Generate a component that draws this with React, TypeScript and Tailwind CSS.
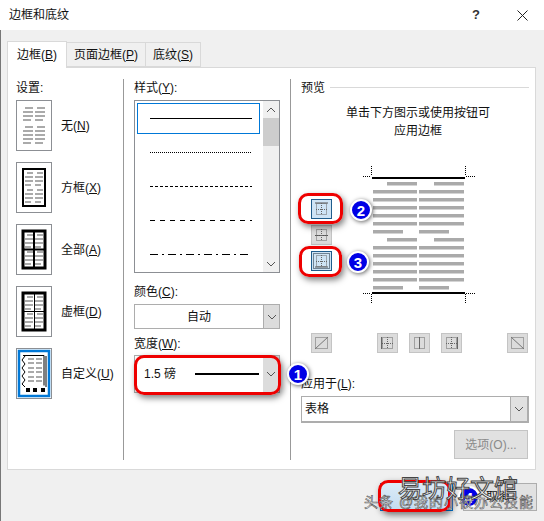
import type { ReactNode } from 'react'

const FONT = "font-['Liberation_Sans','Noto_Sans_CJK_SC',sans-serif]"

function Hot({ text, k, after = ')' }: { text: string; k: string; after?: string }) {
  return (
    <span>
      {text}(<span className="underline">{k}</span>{after}
    </span>
  )
}

function Chevron({ className = '' }: { className?: string }) {
  return (
    <svg width="10" height="6" viewBox="0 0 10 6" className={className}>
      <path d="M1 1l4 4 4-4" fill="none" stroke="#555" strokeWidth="1" />
    </svg>
  )
}

// little grey text lines inside the setting tiles
function Rows({ x1, x2, w, ys }: { x1: number; x2: number; w: number; ys: number[] }) {
  const step = Math.floor(w / 4)
  return (
    <g fill="#aaa">
      {ys.map((y, i) => {
        const indent = i === 0 || i === 4
        const short = i === 3 || i === ys.length - 1
        const d = indent ? step : 0
        const cut = short ? step : 0
        return (
          <g key={y}>
            <rect x={x1 + d} y={y} width={w - d - cut} height="2" />
            <rect x={x2 + d} y={y} width={w - d - cut} height="2" />
          </g>
        )
      })}
    </g>
  )
}

function Tile({ children, label }: { children: ReactNode; label: ReactNode }) {
  return (
    <div className="flex items-center h-[51px]">
      <div className="w-[36px] h-[51px] border border-[#8c8f94] bg-white flex items-center justify-center">
        <svg width="34" height="49" viewBox="0 0 34 49" className="block">
          {children}
        </svg>
      </div>
      <div className="ml-[9px] text-[12px] text-[#111]">{label}</div>
    </div>
  )
}

function StyleRow({ dash }: { dash?: string }) {
  return (
    <div className="h-[34px] flex items-center pl-[13px]">
      <svg width="104" height="3" className="block">
        <line x1="0" y1="1.5" x2="102" y2="1.5" stroke="#000" strokeWidth="1" strokeDasharray={dash} />
      </svg>
    </div>
  )
}

function BorderBtn({ children, active }: { children: ReactNode; active?: boolean }) {
  return (
    <div
      className={
        active
          ? 'w-[21px] h-[20px] border border-[#1f5c8c] bg-[#cfe4f5]'
          : 'w-[21px] h-[20px] border border-[#c4c4c4] bg-[#dcdcdc]'
      }
    >
      <svg width="19" height="18" viewBox="0 0 19 18" className="block">
        {children}
      </svg>
    </div>
  )
}

const dots = { fill: 'none', stroke: '#666', strokeWidth: 1, strokeDasharray: '1 1' }

function Grid() {
  return (
    <>
      <rect x="4.5" y="3.5" width="10" height="11" {...dots} />
      <line x1="9.5" y1="3" x2="9.5" y2="15" {...dots} />
      <line x1="4" y1="9.5" x2="15" y2="9.5" {...dots} />
    </>
  )
}

function Callout({ n, className }: { n: number; className: string }) {
  return (
    <div
      className={`absolute w-[22px] h-[22px] rounded-full bg-[#0000e6] border-[2px] border-white shadow-[1px_1px_4px_rgba(0,0,0,0.6)] flex items-center justify-center text-white text-[15px] font-bold leading-none ${className}`}
    >
      {n}
    </div>
  )
}

const redBox = 'absolute border-[3px] border-[#ee0000] rounded-[10px] shadow-[2px_3px_6px_rgba(0,0,0,0.5)]'

const pageRows = [182, 190, 198, 206, 214, 222, 230, 238, 246, 254, 262, 270, 278, 286]
const tileYs = [6, 10, 14, 18, 25, 29, 33, 37, 41]
const boxYs = [9, 13, 17, 21, 26, 30, 34, 38]

export default function App() {
  return (
    <div className={`relative w-[544px] h-[521px] overflow-hidden bg-[#f0f0f0] text-[12px] leading-[16px] text-[#111] ${FONT}`}>
      {/* title bar */}
      <div className="h-[30px] bg-white flex items-center pl-[9px] pr-[16px]">
        <span className="flex-1 text-[12px]">边框和底纹</span>
        <span className="text-[13px] mr-[37px] font-bold text-[#333]">?</span>
        <svg width="11" height="11" viewBox="0 0 11 11">
          <path d="M0.5 0.5l10 10M10.5 0.5l-10 10" stroke="#222" strokeWidth="1" />
        </svg>
      </div>

      <div className="border-l border-[#777] h-[491px] pl-[6px] pr-[8px]">
        {/* tabs */}
        <div className="flex h-[37px] items-end pt-[10px]">
          <div className="w-[60px] h-[27px] bg-white border border-b-0 border-[#d9d9d9] flex items-center justify-center relative top-[1px]">
            <Hot text="边框" k="B" />
          </div>
          <div className="w-[79px] h-[25px] bg-[#f0f0f0] border border-l-0 border-[#d9d9d9] flex items-center justify-center">
            <Hot text="页面边框" k="P" />
          </div>
          <div className="w-[55px] h-[25px] bg-[#f0f0f0] border border-l-0 border-[#d9d9d9] flex items-center justify-center">
            <Hot text="底纹" k="S" />
          </div>
        </div>

        {/* panel */}
        <div className="h-[403px] bg-white border border-[#d9d9d9] flex pt-[11px]">
          {/* settings */}
          <div className="w-[116px] h-[381px] pl-[8px] border-r border-[#999]">
            <div className="h-[21px] pt-[1px]">设置:</div>
            <div className="flex flex-col gap-[11px]">
              <Tile label={<Hot text="无" k="N" />}>
                <Rows x1={6} x2={18} w={10} ys={tileYs} />
              </Tile>
              <Tile label={<Hot text="方框" k="X" />}>
                <rect x="6" y="6" width="22" height="37" fill="none" stroke="#000" strokeWidth="2" />
                <Rows x1={8} x2={18} w={8} ys={boxYs} />
              </Tile>
              <Tile label={<Hot text="全部" k="A" />}>
                <Rows x1={8} x2={18} w={8} ys={boxYs} />
                <rect x="6" y="6" width="22" height="37" fill="none" stroke="#000" strokeWidth="3" />
                <path d="M17 6v37M6 24.5h22" stroke="#000" strokeWidth="2" />
              </Tile>
              <Tile label={<Hot text="虚框" k="D" />}>
                <Rows x1={8} x2={18} w={8} ys={boxYs} />
                <rect x="6" y="6" width="22" height="37" fill="none" stroke="#000" strokeWidth="3" />
                <path d="M17.5 6v37M6 24.5h22" stroke="#000" strokeWidth="1" />
              </Tile>
              <Tile label={<Hot text="自定义" k="U" />}>
                <rect x="2" y="2" width="30" height="45" fill="none" stroke="#0078d7" strokeWidth="2.5" />
                <path d="M6 6.5h21v30" fill="none" stroke="#000" strokeWidth="1" />
                <path d="M29 7v31" stroke="#000" strokeWidth="1" />
                <path d="M8 7l-3 4 3 4-3 4 3 4-3 4 3 4-3 4 3 3" fill="none" stroke="#000" strokeWidth="1" />
                <g fill="#aaa">
                  {[9, 13, 18, 22, 27, 31].map((y) => (
                    <g key={y}>
                      <rect x="11" y={y} width="6" height="2" />
                      <rect x="19" y={y} width="6" height="2" />
                    </g>
                  ))}
                </g>
                <g fill="#000">
                  <rect x="9" y="39" width="4" height="4" />
                  <rect x="16" y="39" width="4" height="4" />
                  <rect x="24" y="39" width="4" height="4" />
                </g>
              </Tile>
            </div>
          </div>

          {/* style column */}
          <div className="w-[167px] h-[381px] pl-[10px] border-r border-[#999]">
            <div className="h-[21px] pt-[1px]"><Hot text="样式" k="Y" after="):" /></div>
            <div className="w-[146px] h-[173px] border border-[#8c8f94] flex pl-[2px] pt-[2px]">
              <div className="w-[123px] overflow-hidden">
                <div className="h-[31px] mb-px border border-[#0078d7] flex items-center pl-[12px]">
                  <svg width="104" height="3" className="block">
                    <line x1="0" y1="1.5" x2="102" y2="1.5" stroke="#000" strokeWidth="1" />
                  </svg>
                </div>
                <StyleRow dash="1 1" />
                <StyleRow dash="3 2" />
                <StyleRow dash="5 5" />
                <StyleRow dash="8 4 2 4" />
              </div>
              <div className="ml-[3px] w-[16px] -mt-[2px] flex flex-col bg-[#f0f0f0]">
                <div className="h-[17px] flex items-center justify-center">
                  <Chevron className="rotate-180" />
                </div>
                <div className="h-[28px] bg-[#cdcdcd]" />
                <div className="flex-1" />
                <div className="h-[17px] flex items-center justify-center">
                  <Chevron />
                </div>
              </div>
            </div>

            <div className="mt-[11px] h-[20px]"><Hot text="颜色" k="C" after="):" /></div>
            <div className="w-[146px] h-[25px] border border-[#adadad] flex">
              <div className="flex-1 flex items-center justify-center">自动</div>
              <div className="w-[16px] bg-[#dcdcdc] border-l border-[#adadad] flex items-center justify-center">
                <Chevron />
              </div>
            </div>

            <div className="mt-[7px] h-[19px]"><Hot text="宽度" k="W" after="):" /></div>
            <div className="w-[146px] h-[38px] border border-[#adadad] flex">
              <div className="flex-1 flex items-center pl-[9px] gap-[17px]">
                <span className="w-[34px] whitespace-nowrap text-[12px]">1.5 磅</span>
                <div className="w-[64px] h-[2px] bg-black" />
              </div>
              <div className="w-[16px] bg-[#dcdcdc] flex items-center justify-center">
                <Chevron />
              </div>
            </div>
          </div>

          {/* preview column */}
          <div className="flex-1 pl-[10px] pr-[6px]">
            <div className="flex items-center h-[17px]">
              <span>预览</span>
              <div className="flex-1 h-px bg-[#d9d9d9] ml-[5px]" />
            </div>
            <div className="mt-[8px] pl-[6px] text-center text-[12px] leading-[18px]">
              <div>单击下方图示或使用按钮可</div>
              <div>应用边框</div>
            </div>

            <div className="flex mt-[24px] h-[146px]">
              <div className="w-[59px] pl-[10px] pt-[35px] flex flex-col gap-[6px]">
                <BorderBtn active>
                  <path d="M3 3h13" stroke="#555" />
                  <Grid />
                </BorderBtn>
                <BorderBtn>
                  <path d="M3 9.5h13" stroke="#555" />
                  <Grid />
                </BorderBtn>
                <BorderBtn active>
                  <rect x="1.5" y="1.5" width="16" height="15" {...dots} stroke="#123" />
                  <path d="M3 15h13" stroke="#555" />
                  <Grid />
                </BorderBtn>
              </div>
              <svg width="122" height="146" viewBox="0 0 122 146" className="block -ml-[1px]">
                <g transform="translate(-360,-164)">
                  <path d="M372.5 166v10M364 176.5h8M466.5 166v10M467 176.5h9M372.5 294v10M364 293.5h8M466.5 294v10M467 293.5h9" fill="none" stroke="#000" strokeDasharray="1 1" />
                  <rect x="373" y="177" width="93" height="2" fill="#000" />
                  <rect x="373" y="292" width="93" height="2" fill="#000" />
                  <g fill="#aaa">
                    {pageRows.map((y, i) => {
                      const indent = i === 0 || i === 7
                      const short = i === 6 || i === 13
                      return (
                        <g key={y}>
                          <rect x={indent ? 388 : 374} y={y} width={indent ? 30 : short ? 30 : 44} height="3.5" />
                          <rect x={indent ? 435 : 420} y={y} width={indent ? 30 : short ? 30 : 45} height="3.5" />
                        </g>
                      )
                    })}
                  </g>
                </g>
              </svg>
            </div>

            <div className="mt-[23px] flex pl-[10px] h-[20px]">
              <BorderBtn>
                <rect x="3.5" y="3.5" width="12" height="11" {...dots} />
                <path d="M3 15L16 3" stroke="#777" />
              </BorderBtn>
              <div className="ml-[45px]">
                <BorderBtn>
                  <Grid />
                  <path d="M3.5 3v12" stroke="#666" />
                </BorderBtn>
              </div>
              <div className="ml-[11px]">
                <BorderBtn>
                  <rect x="4.5" y="3.5" width="10" height="11" {...dots} />
                  <path d="M9.5 3v12" stroke="#666" />
                </BorderBtn>
              </div>
              <div className="ml-[11px]">
                <BorderBtn>
                  <Grid />
                  <path d="M15.5 3v12" stroke="#666" />
                </BorderBtn>
              </div>
              <div className="ml-[45px]">
                <BorderBtn>
                  <rect x="3.5" y="3.5" width="12" height="11" {...dots} />
                  <path d="M3 3l13 12" stroke="#777" />
                </BorderBtn>
              </div>
            </div>

            <div className="mt-[23px] h-[20px]"><Hot text="应用于" k="L" after="):" /></div>
            <div className="w-[228px] h-[27px] border border-[#adadad] flex border-r-2 border-b-2">
              <div className="flex-1 flex items-center pl-[3px] text-[12px]">表格</div>
              <div className="w-[17px] bg-[#e1e1e1] border-l border-[#adadad] flex items-center justify-center">
                <Chevron />
              </div>
            </div>
            <div className="mt-[7px] ml-[153px] w-[74px] h-[29px] border border-[#c4c4c4] bg-[#e1e1e1] text-[#8a8a8a] flex items-center justify-center">
              选项(O)...
            </div>
          </div>
        </div>

        {/* footer buttons */}
        <div className="flex justify-end pt-[13px] gap-[10px]">
          <div className="w-[73px] h-[28px] border border-[#0078d7] bg-[#e1e1e1]" />
          <div className="w-[74px] h-[28px] border border-[#adadad] bg-[#e1e1e1] -mr-[1px] flex items-center justify-end pr-[26px]">
            取消
          </div>
        </div>
      </div>

      {/* annotations pasted on top of the screenshot */}
      <div className={`${redBox} left-[134px] top-[355px] w-[147px] h-[40px]`} />
      <div className={`${redBox} left-[298px] top-[193px] w-[45px] h-[31px]`} />
      <div className={`${redBox} left-[299px] top-[246px] w-[43px] h-[31px]`} />
      <div className={`${redBox} left-[378px] top-[480px] w-[73px] h-[32px] bg-[linear-gradient(180deg,#dcebf7,#c4dcf0)]`} />
      <Callout n={1} className="left-[287px] top-[363px]" />
      <Callout n={2} className="left-[350px] top-[199px]" />
      <Callout n={3} className="left-[347px] top-[251px]" />
      <Callout n={4} className="left-[458px] top-[486px] border-transparent shadow-none" />

      <div className="absolute left-[364px] top-[494px] text-[14px] leading-[16px] tracking-[1px] text-white whitespace-nowrap [-webkit-text-stroke:0.6px_#555]">
        头条 @我的小筱办公技能
      </div>
      <div className="absolute left-[398px] top-[475px] text-[24px] leading-[28px] text-white whitespace-nowrap [-webkit-text-stroke:1px_#444]">
        易坊好文馆
      </div>
    </div>
  )
}
